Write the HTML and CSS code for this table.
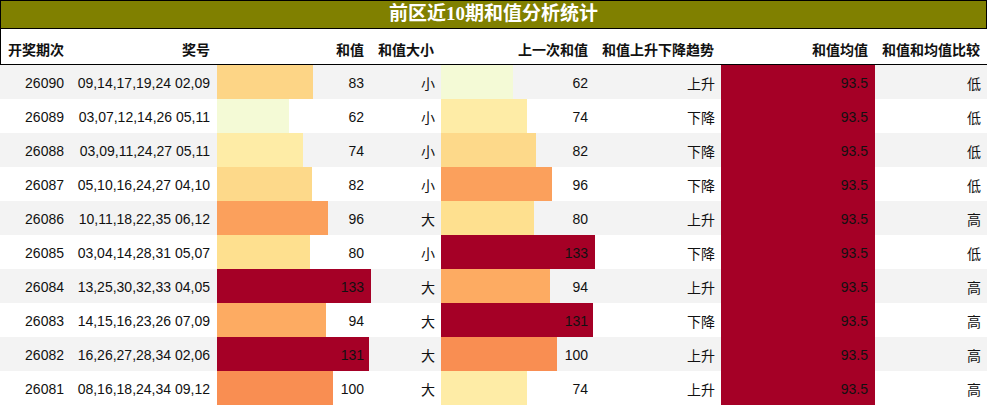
FILE: index.html
```html
<!DOCTYPE html>
<html lang="zh">
<head>
<meta charset="utf-8">
<title>前区近10期和值分析统计</title>
<link rel="stylesheet" href="styles.css">
</head>
<body>
<div class="report">
  <div class="title">前区近10期和值分析统计</div>
  <table class="stats">
    <colgroup>
      <col class="c1"><col class="c2"><col class="c3"><col class="c4"><col class="c5"><col class="c6"><col class="c7"><col class="c8">
    </colgroup>
    <thead>
      <tr>
        <th class="left">开奖期次</th>
        <th>奖号</th>
        <th>和值</th>
        <th>和值大小</th>
        <th>上一次和值</th>
        <th>和值上升下降趋势</th>
        <th>和值均值</th>
        <th>和值和均值比较</th>
      </tr>
    </thead>
    <tbody>
      <tr>
        <td>26090</td><td>09,14,17,19,24 02,09</td>
        <td class="bar" style="--w:96px;--c:#fdd586">83</td><td>小</td>
        <td class="bar" style="--w:72px;--c:#f4fad6">62</td><td>上升</td>
        <td class="bar" style="--w:154px;--c:#a50026">93.5</td><td>低</td>
      </tr>
      <tr>
        <td>26089</td><td>03,07,12,14,26 05,11</td>
        <td class="bar" style="--w:72px;--c:#f4fad6">62</td><td>小</td>
        <td class="bar" style="--w:86px;--c:#feeca6">74</td><td>下降</td>
        <td class="bar" style="--w:154px;--c:#a50026">93.5</td><td>低</td>
      </tr>
      <tr>
        <td>26088</td><td>03,09,11,24,27 05,11</td>
        <td class="bar" style="--w:86px;--c:#feeca6">74</td><td>小</td>
        <td class="bar" style="--w:95px;--c:#fdd98a">82</td><td>下降</td>
        <td class="bar" style="--w:154px;--c:#a50026">93.5</td><td>低</td>
      </tr>
      <tr>
        <td>26087</td><td>05,10,16,24,27 04,10</td>
        <td class="bar" style="--w:95px;--c:#fdd98a">82</td><td>小</td>
        <td class="bar" style="--w:111px;--c:#fba05c">96</td><td>下降</td>
        <td class="bar" style="--w:154px;--c:#a50026">93.5</td><td>低</td>
      </tr>
      <tr>
        <td>26086</td><td>10,11,18,22,35 06,12</td>
        <td class="bar" style="--w:111px;--c:#fba05c">96</td><td>大</td>
        <td class="bar" style="--w:93px;--c:#fee08f">80</td><td>上升</td>
        <td class="bar" style="--w:154px;--c:#a50026">93.5</td><td>高</td>
      </tr>
      <tr>
        <td>26085</td><td>03,04,14,28,31 05,07</td>
        <td class="bar" style="--w:93px;--c:#fee08f">80</td><td>小</td>
        <td class="bar" style="--w:154px;--c:#a50026">133</td><td>下降</td>
        <td class="bar" style="--w:154px;--c:#a50026">93.5</td><td>低</td>
      </tr>
      <tr>
        <td>26084</td><td>13,25,30,32,33 04,05</td>
        <td class="bar" style="--w:154px;--c:#a50026">133</td><td>大</td>
        <td class="bar" style="--w:109px;--c:#fdab62">94</td><td>上升</td>
        <td class="bar" style="--w:154px;--c:#a50026">93.5</td><td>高</td>
      </tr>
      <tr>
        <td>26083</td><td>14,15,16,23,26 07,09</td>
        <td class="bar" style="--w:109px;--c:#fdab62">94</td><td>大</td>
        <td class="bar" style="--w:152px;--c:#a50026">131</td><td>下降</td>
        <td class="bar" style="--w:154px;--c:#a50026">93.5</td><td>高</td>
      </tr>
      <tr>
        <td>26082</td><td>16,26,27,28,34 02,06</td>
        <td class="bar" style="--w:152px;--c:#a50026">131</td><td>大</td>
        <td class="bar" style="--w:116px;--c:#f98e52">100</td><td>上升</td>
        <td class="bar" style="--w:154px;--c:#a50026">93.5</td><td>高</td>
      </tr>
      <tr>
        <td>26081</td><td>08,16,18,24,34 09,12</td>
        <td class="bar" style="--w:116px;--c:#f98e52">100</td><td>大</td>
        <td class="bar" style="--w:86px;--c:#feeca6">74</td><td>上升</td>
        <td class="bar" style="--w:154px;--c:#a50026">93.5</td><td>高</td>
      </tr>
    </tbody>
  </table>
</div>
</body>
</html>
```

FILE: styles.css
```css
html, body {
  margin: 0;
  padding: 0;
  background: #ffffff;
}

.report {
  width: 987px;
  font-family: "Liberation Sans", "Noto Sans CJK SC", sans-serif;
  color: #111;
}

.title {
  box-sizing: border-box;
  height: 29px;
  border: 1px solid #000;
  background: #808000;
  color: #fff;
  font-family: "Liberation Serif", "Noto Sans CJK SC", serif;
  font-weight: bold;
  font-size: 19px;
  line-height: 26px;
  text-align: center;
}

.stats {
  width: 987px;
  border-collapse: separate;
  table-layout: fixed;
  border-spacing: 0;
}

.c1 { width: 71px; }
.c2 { width: 146px; }
.c3 { width: 154px; }
.c4 { width: 70px; }
.c5 { width: 154px; }
.c6 { width: 126px; }
.c7 { width: 154px; }
.c8 { width: 112px; }

.stats th {
  height: 36px;
  padding: 4px 7px 0 0;
  box-sizing: border-box;
  font-size: 14px;
  font-weight: bold;
  text-align: right;
  white-space: nowrap;
  border-bottom: 1px solid #000;
  color: #111;
}

.stats th.left {
  text-align: left;
  padding-left: 7px;
  border-left: 1px solid #000;
}

.stats td {
  height: 34px;
  padding: 2px 7px 0 0;
  box-sizing: border-box;
  font-size: 14px;
  text-align: right;
  white-space: nowrap;
  color: #111;
}

.stats td:nth-child(4),
.stats td:nth-child(6),
.stats td:nth-child(8) {
  padding-right: 6px;
}

.stats tbody tr:nth-child(odd) td {
  background-color: #f3f3f3;
}

.stats tbody tr td.bar {
  background-image: linear-gradient(to right, var(--c) 0, var(--c) var(--w), transparent var(--w));
}
```
